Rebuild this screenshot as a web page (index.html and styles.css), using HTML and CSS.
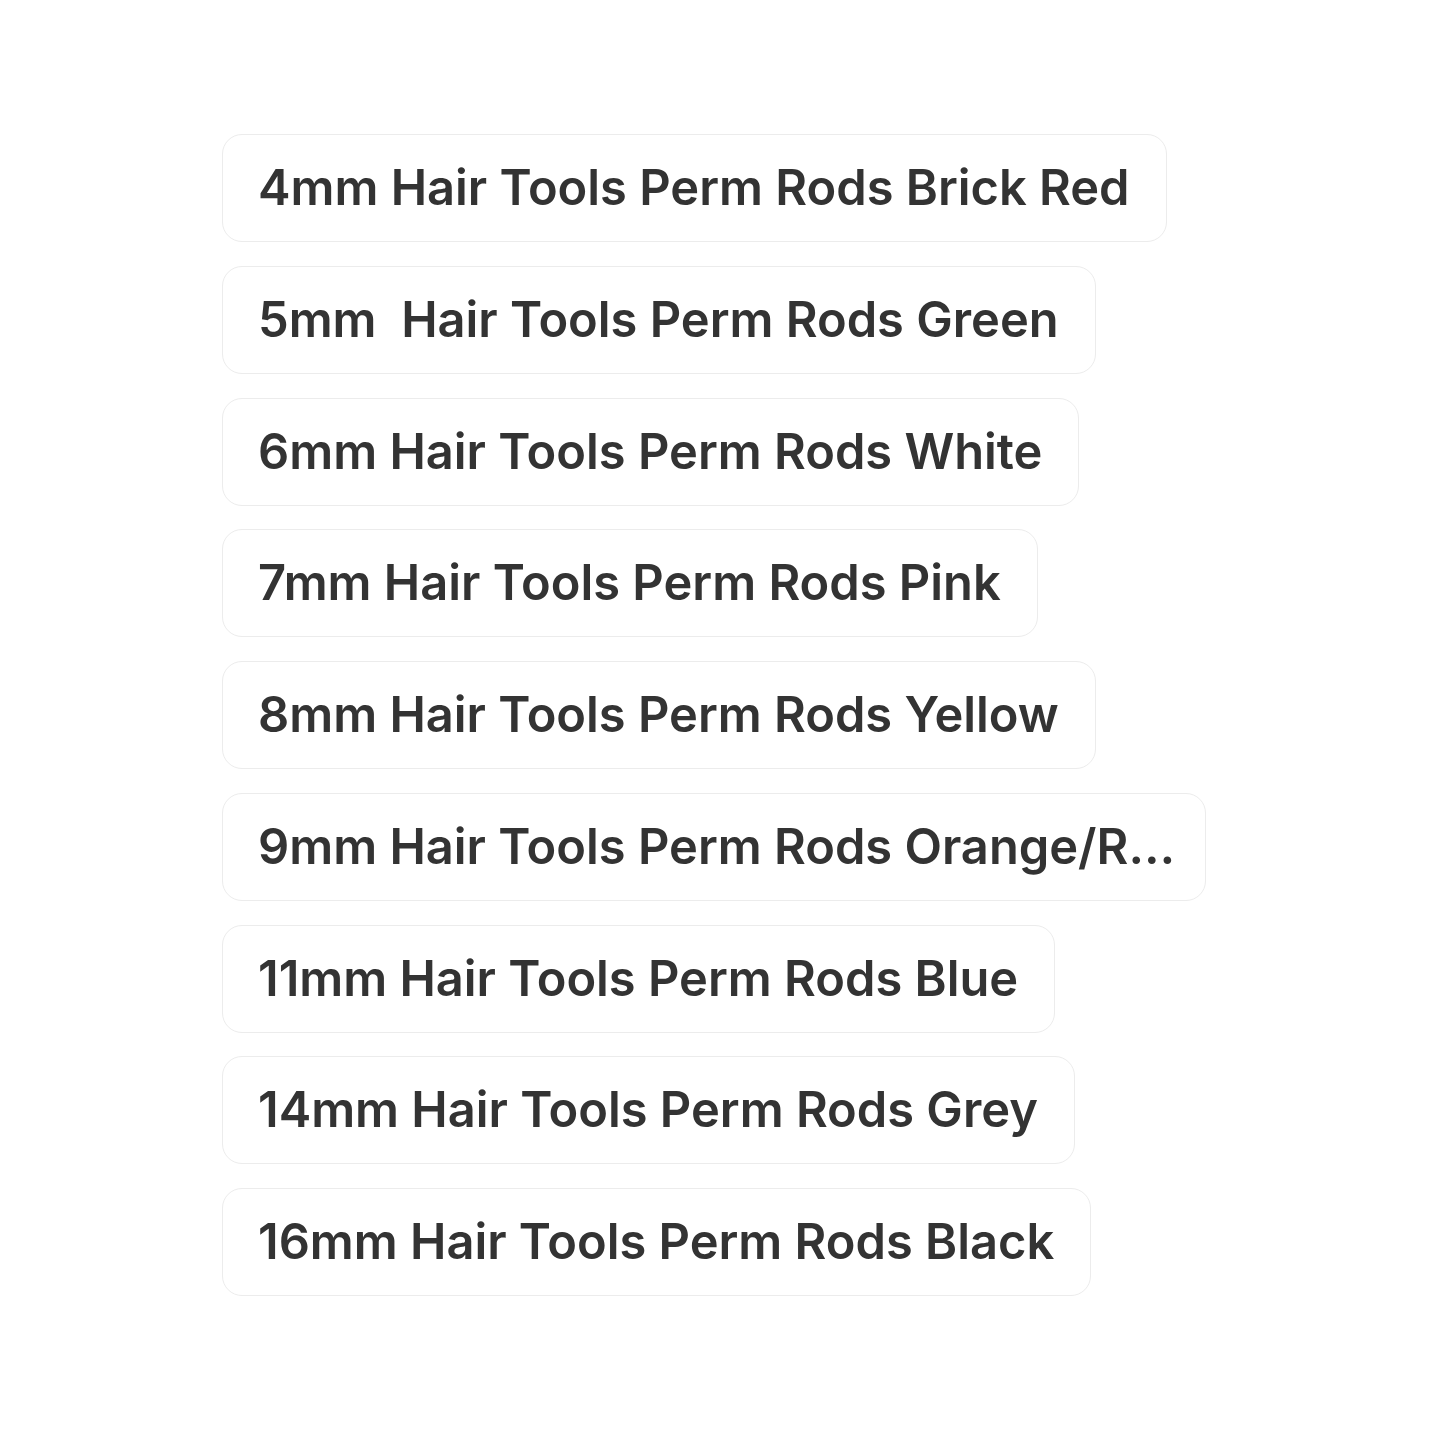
FILE: index.html
```html
<!DOCTYPE html>
<html lang="en">

<head>
    <meta charset="UTF-8">
    <meta name="viewport" content="width=device-width, initial-scale=1.0">
    <title>Perm Rods</title>
    <link rel="stylesheet" href="styles.css">
</head>

<body>
    <div class="list">
        <div class="chip">4mm Hair Tools Perm Rods Brick Red</div>
        <div class="chip">5mm  Hair Tools Perm Rods Green</div>
        <div class="chip">6mm Hair Tools Perm Rods White</div>
        <div class="chip">7mm Hair Tools Perm Rods Pink</div>
        <div class="chip">8mm Hair Tools Perm Rods Yellow</div>
        <div class="chip chip-full" title="9mm Hair Tools Perm Rods Orange/Red">9mm Hair Tools Perm Rods Orange/R…</div>
        <div class="chip">11mm Hair Tools Perm Rods Blue</div>
        <div class="chip">14mm Hair Tools Perm Rods Grey</div>
        <div class="chip">16mm Hair Tools Perm Rods Black</div>
    </div>
</body>

</html>
```

FILE: styles.css
```css
body {
    margin: 0;
    background: #ffffff;
    font-family: Inter, "Noto Sans", Arial, sans-serif;
}

.list {
    display: flex;
    flex-direction: column;
    align-items: flex-start;
    gap: 23.75px;
    padding: 134px 0 0 222px;
}

.chip {
    box-sizing: border-box;
    height: 108px;
    line-height: 106px;
    padding: 0 36px 0 35px;
    max-width: 984px;
    border: 1px solid #ececec;
    border-radius: 20px;
    color: #333333;
    font-size: 48.8px;
    font-weight: 600;
    white-space: pre;
    overflow: hidden;
}

/* long names are cut to the widest chip */
.chip-full {
    width: 984px;
}
```
